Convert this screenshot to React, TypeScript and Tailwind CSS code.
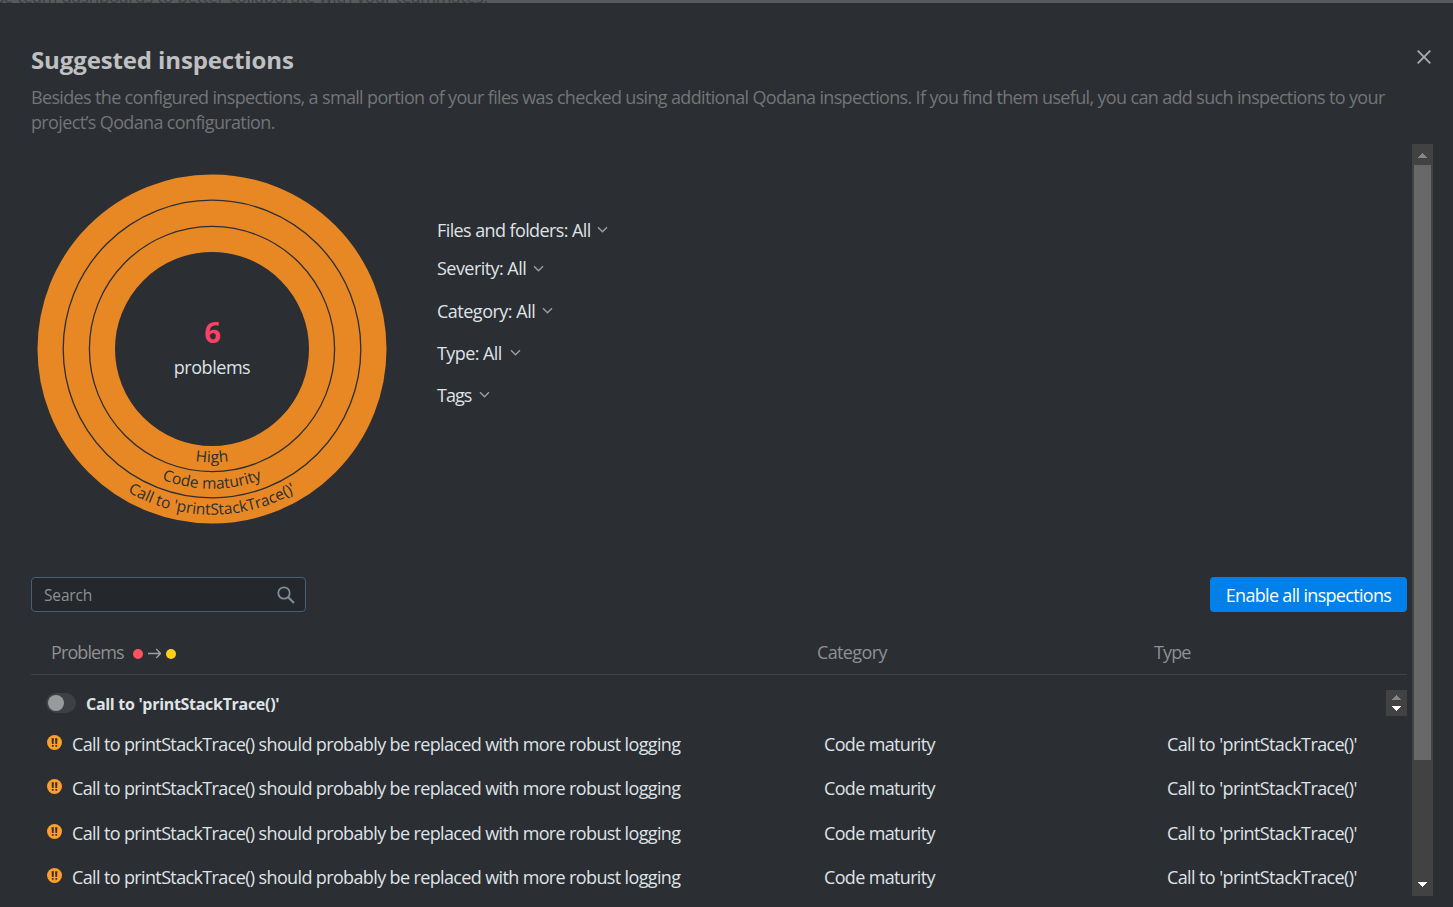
import React from "react";

const message = "Call to printStackTrace() should probably be replaced with more robust logging";

const filters = [
  { label: "Files and folders: All", cls: "h-[38px] tracking-[-0.6px]", gap: "ml-[6px]" },
  { label: "Severity: All", cls: "h-[39px] tracking-[-0.55px]", gap: "ml-[7px]" },
  { label: "Category: All", cls: "h-[46px] tracking-[-0.5px]", gap: "ml-[7px]" },
  { label: "Type: All", cls: "h-[38px] tracking-[-0.58px]", gap: "ml-[8px]" },
  { label: "Tags", cls: "h-[46px] tracking-[-1px]", gap: "ml-[8px]" },
];

const rows = [
  { id: 1, height: "h-[44px]" },
  { id: 2, height: "h-[44px]" },
  { id: 3, height: "h-[46px]" },
  { id: 4, height: "h-[43px]" },
];

function Chevron({ className }: { className: string }) {
  return (
    <svg className={className} width="11" height="8" viewBox="0 0 11 8" fill="none">
      <path d="M1 1.2 5.5 5.8 10 1.2" stroke="#9a9b9d" strokeWidth="1.5" />
    </svg>
  );
}

function Arrow({ up, color }: { up?: boolean; color: string }) {
  return (
    <svg width="9" height="5" viewBox="0 0 9 5" shapeRendering="crispEdges">
      <path d={up ? "M0 5 4.5 0 9 5Z" : "M0 0H9L4.5 5Z"} fill={color} />
    </svg>
  );
}

function Sunburst() {
  return (
    <svg width="350" height="350" viewBox="37 174 350 350" className="ml-[6px] block" fontFamily="'Open Sans', 'Noto Sans', sans-serif">
      <defs>
        <path id="ring-a" d="M98.5 349A113.5 113.5 0 0 0 325.5 349" />
        <path id="ring-b" d="M72.2 349A139.8 139.8 0 0 0 351.8 349" />
        <path id="ring-c" d="M46.2 349A165.8 165.8 0 0 0 377.8 349" />
      </defs>
      <circle cx="212" cy="349" r="135.75" fill="none" stroke="#e88824" strokeWidth="77.5" />
      <circle cx="212" cy="349" r="148.8" fill="none" stroke="#2b2e33" strokeWidth="1.3" />
      <circle cx="212" cy="349" r="122.6" fill="none" stroke="#2b2e33" strokeWidth="1.3" />
      <g fill="#2b2e33" fontSize="15.5" textAnchor="middle">
        <text letterSpacing="0.2"><textPath href="#ring-a" startOffset="50%">High</textPath></text>
        <text letterSpacing="-0.03"><textPath href="#ring-b" startOffset="50%">Code maturity</textPath></text>
        <text letterSpacing="-0.03"><textPath href="#ring-c" startOffset="50%">Call to 'printStackTrace()'</textPath></text>
      </g>
      <text x="212.5" y="343" textAnchor="middle" fontSize="29" fontWeight="700" fill="#fb4164">6</text>
      <text x="212" y="374" textAnchor="middle" fontSize="18" letterSpacing="-0.45" fill="#dfe3e6">problems</text>
    </svg>
  );
}

function Warning() {
  return (
    <svg width="15" height="15" viewBox="0 0 15 15" className="mt-[-4px] shrink-0">
      <circle cx="7.5" cy="7.5" r="7.5" fill="#fb9f2d" />
      <path d="M4.6 3.2H6.9L6.6 9H4.9ZM8.1 3.2H10.4L10.1 9H8.4ZM4.9 10H6.6V11.8H4.9ZM8.4 10H10.1V11.8H8.4Z" fill="#3b3027" />
    </svg>
  );
}

export default function App() {
  return (
    <div className="flex h-[907px] w-[1453px] flex-col overflow-hidden bg-[#2b2e33] font-['Open_Sans','Noto_Sans',sans-serif] text-[18px] text-[#dfe3e6]">
      <div className="flex h-[3px] shrink-0 items-end overflow-hidden bg-[#595a5b] text-[17px] text-[#3d3e40]">
        <span className="mb-[-4px] ml-[-4px] whitespace-nowrap leading-[20px] tracking-[-0.23px]">se team dashboards to better collaborate with your teammates.</span>
      </div>
      <header className="flex h-[141px] shrink-0 pl-[31px]">
        <div className="w-[1385px] shrink-0 pt-[41px]">
          <h1 className="whitespace-nowrap text-[24px] font-bold leading-[32px] tracking-[-0.12px] text-[#bfc0c1]">Suggested inspections</h1>
          <p className="mt-[9px] whitespace-nowrap leading-[25px] text-[#737577]">
            <span className="tracking-[-0.655px]">Besides the configured inspections, a small portion of your files was checked using additional Qodana inspections. If you find them useful, you can add such inspections to your</span>
            <br />
            <span className="tracking-[-0.64px]">project’s Qodana configuration.</span>
          </p>
        </div>
        <svg width="16" height="16" viewBox="0 0 16 16" className="mt-[46px] shrink-0" fill="none">
          <path d="M1.7 1.7 14.3 14.3M14.3 1.7 1.7 14.3" stroke="#a9aaac" strokeWidth="1.9" />
        </svg>
      </header>

      <main className="flex h-[752px] shrink-0 pl-[31px]">
        <div className="flex w-[1376px] flex-col overflow-hidden">
          <section className="flex h-[433px] shrink-0 pt-[30px]">
            <Sunburst />
            <div className="ml-[50px] mt-[37px] flex flex-col">
              {filters.map((f) => (
                <button key={f.label} className={`flex items-center whitespace-nowrap ${f.cls}`}>
                  {f.label}
                  <Chevron className={f.gap} />
                </button>
              ))}
            </div>
          </section>

          <div className="flex h-[35px] shrink-0 items-center justify-between">
            <div className="flex h-[35px] w-[275px] items-center justify-between rounded-[4px] border border-[#446079] bg-[#24272b] pl-[12px] pr-[10px]">
              <span className="pt-[2px] text-[15.5px] tracking-[-0.15px] text-[#8f9192]">Search</span>
              <svg width="18" height="18" viewBox="0 0 18 18" fill="none" stroke="#7d8e99" className="mt-px">
                <circle cx="7" cy="7" r="5.7" strokeWidth="1.8" />
                <path d="M11 11 17 17" strokeWidth="2.2" />
              </svg>
            </div>
            <button className="h-[35px] w-[197px] whitespace-nowrap rounded-[4px] bg-[#0080e8] pt-[2px] text-center tracking-[-0.68px] text-white">Enable all inspections</button>
          </div>

          <div className="mt-[20px] flex h-[43px] shrink-0 items-center border-b border-[#404246] pb-[2px] text-[#8f9192]">
            <div className="flex w-[786px] items-center pl-[20px]">
              <span className="w-[82px] tracking-[-0.9px]">Problems</span>
              <i className="mt-[3px] size-[10px] rounded-full bg-[#ff5260]" />
              <svg width="13" height="11" viewBox="0 0 13 11" fill="none" stroke="#a0a1a2" className="mx-[5px] mt-[3px]">
                <path d="M0 5.5H12.5M8.2 1 12.5 5.5 8.2 10" strokeWidth="1.3" />
              </svg>
              <i className="mt-[3px] size-[10px] rounded-full bg-[#ffcf1b]" />
            </div>
            <div className="w-[337px] tracking-[-0.63px]">Category</div>
            <div className="tracking-[-0.9px]">Type</div>
          </div>

          <div className="flex shrink-0">
            <div className="w-[1355px]">
              <div className="flex h-[47px] items-center pl-[15px] pt-[11px]">
                <span className="mt-[-3px] flex h-[20px] w-[30px] items-center rounded-full bg-[#3e4044] pl-[2px]">
                  <i className="size-[16px] rounded-full bg-[#999a9b]" />
                </span>
                <b className="ml-[10px] whitespace-nowrap text-[16px] tracking-[-0.3px]">Call to 'printStackTrace()'</b>
              </div>
              {rows.map((r) => (
                <div key={r.id} className={`flex items-center whitespace-nowrap pl-[16px] ${r.height}`}>
                  <Warning />
                  <span className="ml-[10px] w-[752px] tracking-[-0.635px]">{message}</span>
                  <span className="w-[343px] tracking-[-0.66px]">Code maturity</span>
                  <span className="tracking-[-0.61px]">Call to 'printStackTrace()'</span>
                </div>
              ))}
            </div>
            <div className="mt-[15px] flex h-[26px] w-[21px] flex-col items-center gap-[6px] bg-[#424242] pt-[5px]">
              <Arrow up color="#868686" />
              <Arrow color="#ffffff" />
            </div>
          </div>
        </div>

        <div className="ml-[5px] flex w-[21px] flex-col items-center bg-[#424242]">
          <div className="flex h-[21px] items-center pt-[2px]"><Arrow up color="#868686" /></div>
          <div className="h-[595px] w-[17px] bg-[#686868]" />
          <div className="mt-auto flex h-[21px] items-center pb-[2px]"><Arrow color="#ffffff" /></div>
        </div>
      </main>
    </div>
  );
}
